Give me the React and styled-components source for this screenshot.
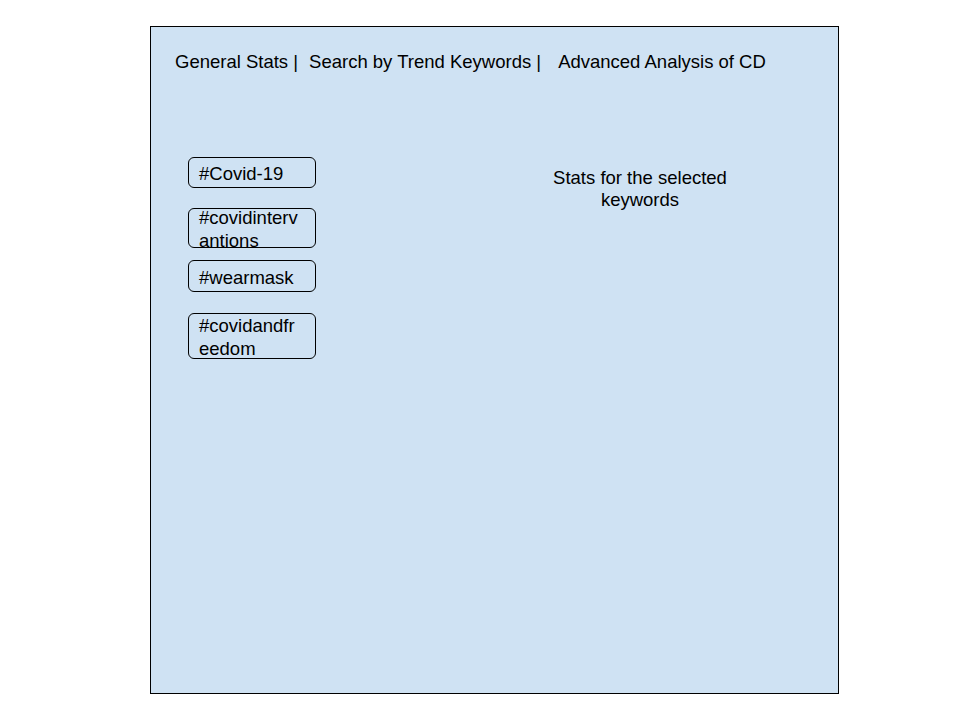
import React from "react";
import styled, { createGlobalStyle } from "styled-components";

const Global = createGlobalStyle`
  html, body { margin: 0; padding: 0; background: #ffffff; }
  body { font-family: "Liberation Sans", Arial, sans-serif; color: #000; }
`;

const Page = styled.div`
  width: 960px;
  height: 720px;
  padding: 26px 0 0 150px;
  box-sizing: border-box;
`;

const Panel = styled.div`
  width: 689px;
  height: 668px;
  box-sizing: border-box;
  border: 1px solid #000;
  background: #cfe2f3;
  display: flex;
  flex-direction: column;
  padding: 24px 0 0 24px;
`;

const NavBar = styled.div`
  display: flex;
  font-size: 18.5px;
  line-height: 21px;
  white-space: pre;
`;

const NavItem = styled.span`
  margin-left: ${(p) => p.$gap}px;
`;

const Body = styled.div`
  display: flex;
  margin-top: 85px;
  padding-left: 13px;
`;

const ChipColumn = styled.div`
  display: flex;
  flex-direction: column;
  width: 128px;
`;

const Chip = styled.div`
  width: 128px;
  height: ${(p) => p.$h}px;
  margin-top: ${(p) => p.$mt}px;
  box-sizing: border-box;
  border: 1px solid #000;
  border-radius: 6px;
  padding: 0 2px 0 10px;
  overflow: visible;
`;

const ChipLabel = styled.div`
  margin-top: ${(p) => p.$offset}px;
  font-size: 18.5px;
  line-height: ${(p) => (p.$wrap ? 22.5 : 22)}px;
  white-space: nowrap;
`;

const Stats = styled.div`
  width: 240px;
  margin-left: 204px;
  margin-top: 10px;
  text-align: center;
  font-size: 18.5px;
  line-height: 22px;
`;

const nav = [
  { text: "General Stats |", gap: 0 },
  { text: "Search by Trend Keywords |", gap: 11 },
  { text: "Advanced Analysis of CD", gap: 17 },
];

const chips = [
  { lines: ["#Covid-19"], h: 31, mt: 0, offset: 5 },
  { lines: ["#covidinterv", "antions"], h: 40, mt: 20, offset: -2 },
  { lines: ["#wearmask"], h: 32, mt: 12, offset: 6 },
  { lines: ["#covidandfr", "eedom"], h: 46, mt: 21, offset: 1 },
];

export default function App() {
  return (
    <>
      <Global />
      <Page>
        <Panel>
          <NavBar>
            {nav.map((n) => (
              <NavItem key={n.text} $gap={n.gap}>
                {n.text}
              </NavItem>
            ))}
          </NavBar>
          <Body>
            <ChipColumn>
              {chips.map((c) => {
                const wrap = c.lines.length > 1;
                return (
                  <Chip key={c.lines[0]} $h={c.h} $mt={c.mt}>
                    <ChipLabel $offset={c.offset} $wrap={wrap}>
                      {c.lines.map((l, i) => (
                        <React.Fragment key={l}>
                          {i > 0 && <br />}
                          {l}
                        </React.Fragment>
                      ))}
                    </ChipLabel>
                  </Chip>
                );
              })}
            </ChipColumn>
            <Stats>
              Stats for the selected
              <br />
              keywords
            </Stats>
          </Body>
        </Panel>
      </Page>
    </>
  );
}
